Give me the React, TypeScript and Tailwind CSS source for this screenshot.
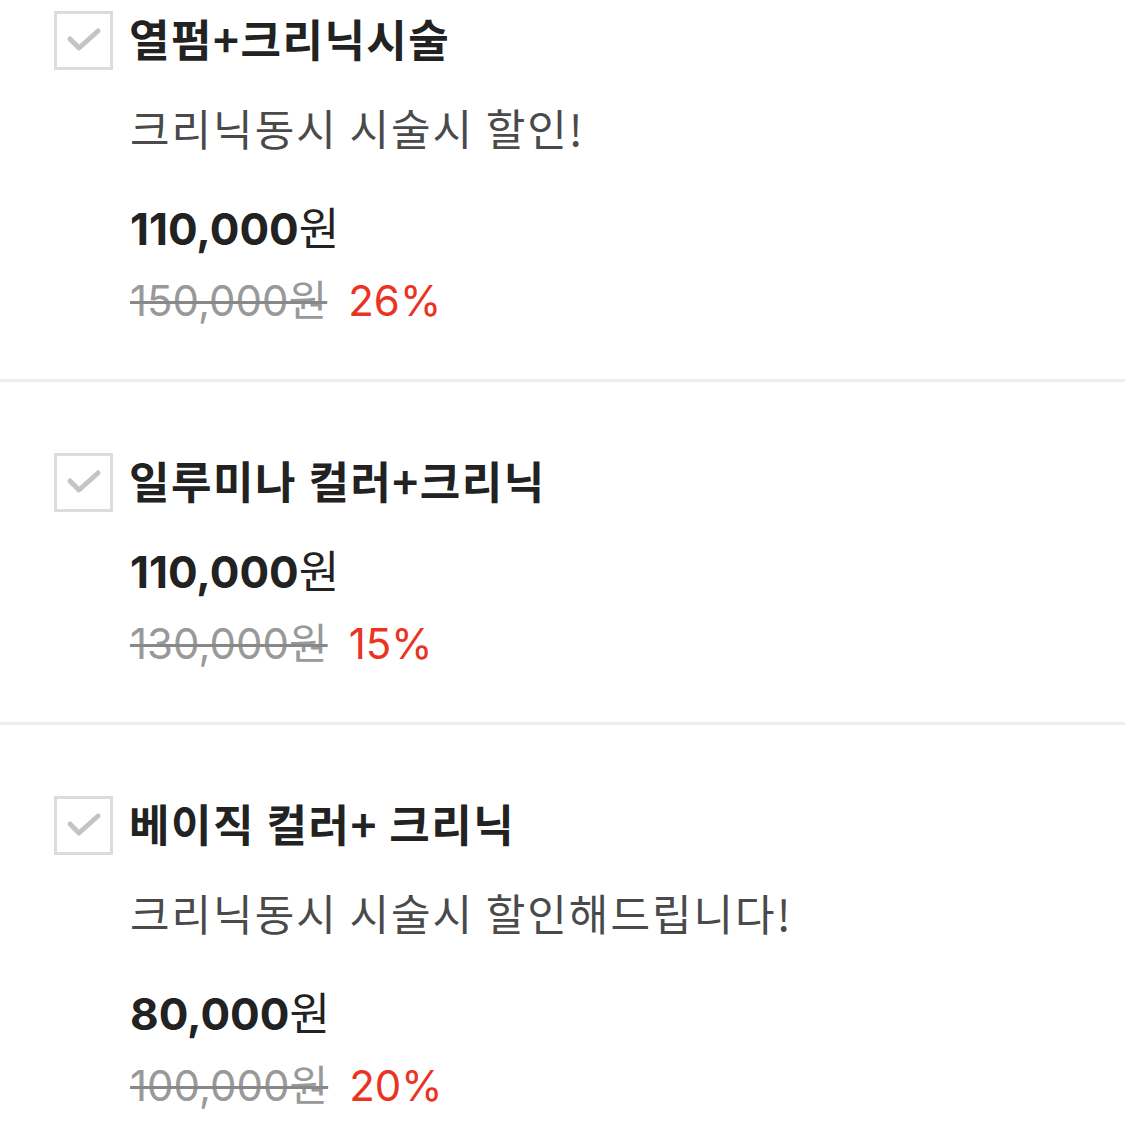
import React from "react";

type Item = {
  title: string;
  desc?: string;
  price: string;
  original: string;
  rate: string;
};

const items: Item[] = [
  { title: "열펌+크리닉시술", desc: "크리닉동시 시술시 할인!", price: "110,000원", original: "150,000원", rate: "26%" },
  { title: "일루미나 컬러+크리닉", price: "110,000원", original: "130,000원", rate: "15%" },
  { title: "베이직 컬러+ 크리닉", desc: "크리닉동시 시술시 할인해드립니다!", price: "80,000원", original: "100,000원", rate: "20%" },
];

function Check() {
  return (
    <div className="w-[59px] h-[59px] border-[3px] border-[#dcdcdc] flex items-center justify-center shrink-0 bg-white">
      <svg width="36" height="26" viewBox="0 0 36 26" fill="none">
        <path d="M4 12 L13 21 L32 4" stroke="#c4c4c4" strokeWidth="5" strokeLinecap="round" strokeLinejoin="round" />
      </svg>
    </div>
  );
}

export default function App() {
  const font = { fontFamily: '"Noto Sans CJK KR", "Noto Sans", sans-serif' };
  const numFont = { fontFamily: 'Inter, "Noto Sans CJK KR", sans-serif' };
  return (
    <div className="w-[1125px] h-[1130px] bg-white overflow-hidden" style={font}>
      {items.map((it, i) => (
        <div key={i}>
          <div className={i === 0 ? "pt-[10px] pb-[48px]" : "pt-[70px] pb-[48px]"}>
            <div className="flex items-center h-[60px] pl-[54px]">
              <Check />
              <div className="ml-[16px] mt-[-5px] text-[44px] font-bold text-[#222] leading-[60px] tracking-[1.5px]">{it.title}</div>
            </div>
            {it.desc && (
              <div className="pl-[130px] mt-[27px] h-[60px] leading-[60px] text-[43px] text-[#4a4a4a] tracking-[2px]">{it.desc}</div>
            )}
            <div
              className={`pl-[130px] h-[60px] leading-[60px] text-[44px] font-bold text-[#222] ${it.desc ? "mt-[39px]" : "mt-[27px]"}`}
              style={numFont}
            >
              {it.price.replace("원", "")}
              <span className="font-normal" style={font}>원</span>
            </div>
            <div className="pl-[130px] mt-[15px] h-[60px] leading-[60px] text-[42px] flex items-center" style={numFont}>
              <span className="text-[#999] line-through decoration-[3px] decoration-[#888]">{it.original}</span>
              <span className="ml-[21px] text-[#ea3323]">{it.rate}</span>
            </div>
          </div>
          {i < items.length - 1 && <div className="h-[3px] bg-[#ebedf0]" />}
        </div>
      ))}
    </div>
  );
}
